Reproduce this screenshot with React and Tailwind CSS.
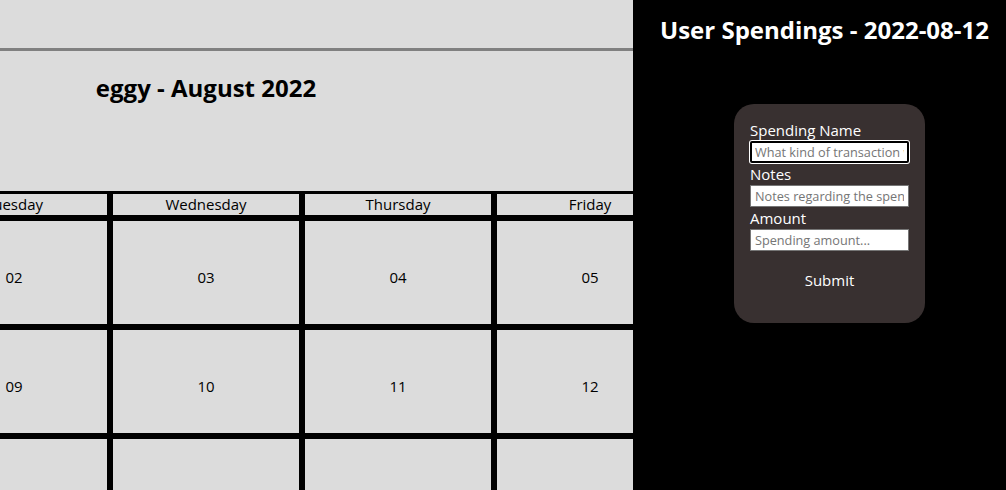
import React from "react";

const DAYS = ["Sunday", "Monday", "Tuesday", "Wednesday", "Thursday", "Friday", "Saturday"];

const WEEKS = [
  ["", "01", "02", "03", "04", "05", "06"],
  ["07", "08", "09", "10", "11", "12", "13"],
  ["14", "15", "16", "17", "18", "19", "20"],
];

function Calendar() {
  return (
    <div className="w-[633px] shrink-0 overflow-hidden bg-[#dcdcdc] text-black">
      <div className="h-[51px] border-b-[3px] border-[#808080]" />
      <div className="ml-[-466px] w-[1344px]">
        <h1 className="pt-[19px] text-center text-[24px] font-bold leading-[36px]">eggy - August 2022</h1>
        <div className="mt-[85px] grid grid-cols-[repeat(7,192px)]">
          {DAYS.map((d) => (
            <div key={d} className="flex h-[27px] items-center justify-center border-[3px] border-black text-[15px]">
              {d}
            </div>
          ))}
          {WEEKS.flat().map((n, i) => (
            <div key={i} className="flex h-[109px] items-center justify-center border-[3px] border-black pt-[10px] text-[15px]">
              {n}
            </div>
          ))}
        </div>
      </div>
    </div>
  );
}

function SpendingForm() {
  return (
    <div className="flex-1 bg-black text-white">
      <h2 className="pl-[10px] pt-[12px] text-center text-[24px] font-bold leading-[36px]">User Spendings - 2022-08-12</h2>
      <form className="ml-[101px] mt-[56px] flex w-[191px] flex-col rounded-[20px] bg-[#383030] px-[16px] pb-[24px] pt-[15px]">
        <label className="text-[15px] leading-[22px]">Spending Name</label>
        <input
          className="h-[22px] rounded-[2px] border-2 border-black bg-white px-[3px] text-[12.7px] text-black ring-1 ring-white outline-none placeholder:text-[#757575]"
          placeholder="What kind of transaction was it?"
        />
        <label className="text-[15px] leading-[22px]">Notes</label>
        <input
          className="h-[22px] border border-[#767676] bg-white px-[4px] text-[12.7px] text-black outline-none placeholder:text-[#757575]"
          placeholder="Notes regarding the spending..."
        />
        <label className="text-[15px] leading-[22px]">Amount</label>
        <input
          className="h-[22px] border border-[#767676] bg-white px-[4px] text-[12.7px] text-black outline-none placeholder:text-[#757575]"
          placeholder="Spending amount..."
        />
        <button type="button" className="mt-[10px] h-[38px] text-[15px]">
          Submit
        </button>
      </form>
    </div>
  );
}

export default function App() {
  return (
    <div className="flex h-[490px] w-[1006px] overflow-hidden font-['Open_Sans',sans-serif]">
      <Calendar />
      <SpendingForm />
    </div>
  );
}
